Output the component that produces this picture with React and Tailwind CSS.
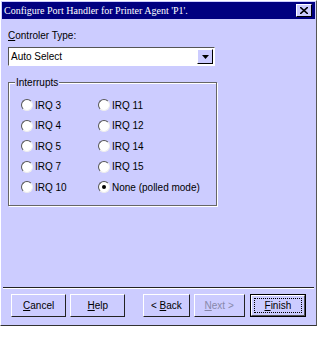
const Radio = ({ label, checked }) => (
  <div className="flex items-center h-[20.5px]">
    <span className="w-[12px] h-[12px] rounded-full bg-white border border-t-[#555] border-l-[#555] border-r-[#eee] border-b-[#eee] mr-[2px] flex items-center justify-center">
      {checked && <span className="w-[4px] h-[4px] rounded-full bg-black" />}
    </span>
    <span>{label}</span>
  </div>
);

const Btn = ({ children, disabled, def, w = 'w-[56px]' }) => (
  <div className={`${w} h-[23px] flex items-center justify-center bg-[#ccccff] border ${def ? 'border-black' : 'border-t-white border-l-white border-r-[#222] border-b-[#222]'} ${disabled ? 'text-[#8888aa]' : 'text-black'}`}>
    {def ? (
      <div className="w-full h-full border border-t-white border-l-white border-r-[#555] border-b-[#555] p-[2px]">
        <div className="w-full h-full border border-dotted border-black flex items-center justify-center">{children}</div>
      </div>
    ) : (
      children
    )}
  </div>
);

export default function App() {
  return (
    <div className="w-[319px] h-[340px] bg-white" style={{ fontFamily: '"Liberation Sans", Arial, sans-serif' }}>
      <div className="w-[317px] h-[326px] bg-[#ccccff] border border-t-white border-l-white border-r-[#555] border-b-[#333] flex flex-col text-[10px] text-black">
        <div className="mx-[1px] mt-[1px] h-[17px] bg-[#000080] flex items-center justify-between pl-[2px] pr-[3px]">
          <span className="text-white text-[10px]" style={{ fontFamily: '"Liberation Serif", "Times New Roman", serif' }}>
            Configure Port Handler for Printer Agent 'P1'.
          </span>
          <div className="w-[16px] h-[13px] bg-[#ccccff] border border-t-white border-l-white border-r-black border-b-black flex items-center justify-center">
            <svg width="8" height="7" viewBox="0 0 8 7">
              <path d="M0 0 L8 7 M8 0 L0 7" stroke="black" strokeWidth="1.6" />
            </svg>
          </div>
        </div>
        <div className="px-[7px] pt-[9px]">
          <div className="h-[14px]"><span className="underline">C</span>ontroler Type:</div>
          <div className="mt-[5px] w-[207px] h-[19px] bg-white border border-t-[#555] border-l-[#555] border-r-white border-b-white flex items-center justify-between">
            <span className="pl-[2px]">Auto Select</span>
            <div className="w-[16px] h-[15px] mr-[1px] bg-[#ccccff] border border-t-white border-l-white border-r-black border-b-black flex items-center justify-center">
              <svg width="7" height="4" viewBox="0 0 7 4">
                <path d="M0 0 H7 L3.5 4 Z" fill="black" />
              </svg>
            </div>
          </div>
          <div className="relative mt-[16px] w-[209px] h-[124px] border border-[#666] shadow-[1px_1px_0_white,inset_1px_1px_0_white]">
            <span className="absolute -top-[8px] left-[6px] px-[1px] bg-[#ccccff]">Interrupts</span>
            <div className="grid grid-cols-[77px_1fr] pl-[12px] pt-[12px]">
              <div>
                <Radio label="IRQ 3" />
                <Radio label="IRQ 4" />
                <Radio label="IRQ 5" />
                <Radio label="IRQ 7" />
                <Radio label="IRQ 10" />
              </div>
              <div>
                <Radio label="IRQ 11" />
                <Radio label="IRQ 12" />
                <Radio label="IRQ 14" />
                <Radio label="IRQ 15" />
                <Radio label="None (polled mode)" checked />
              </div>
            </div>
          </div>
        </div>
        <div className="flex-1" />
        <div className="mx-[2px] h-[2px] border-t border-[#222] border-b border-b-white" />
        <div className="flex items-center px-[10px] pt-[5px] pb-[8px]">
          <Btn><span><span className="underline">C</span>ancel</span></Btn>
          <div className="w-[4px]" />
          <Btn><span><span className="underline">H</span>elp</span></Btn>
          <div className="w-[18px]" />
          <Btn w="w-[47px]"><span>&lt; <span className="underline">B</span>ack</span></Btn>
          <div className="w-[4px]" />
          <Btn w="w-[52px]" disabled><span><span className="underline">N</span>ext &gt;</span></Btn>
          <div className="w-[5px]" />
          <Btn def w="w-[57px]"><span><span className="underline">F</span>inish</span></Btn>
        </div>
      </div>
    </div>
  );
}
